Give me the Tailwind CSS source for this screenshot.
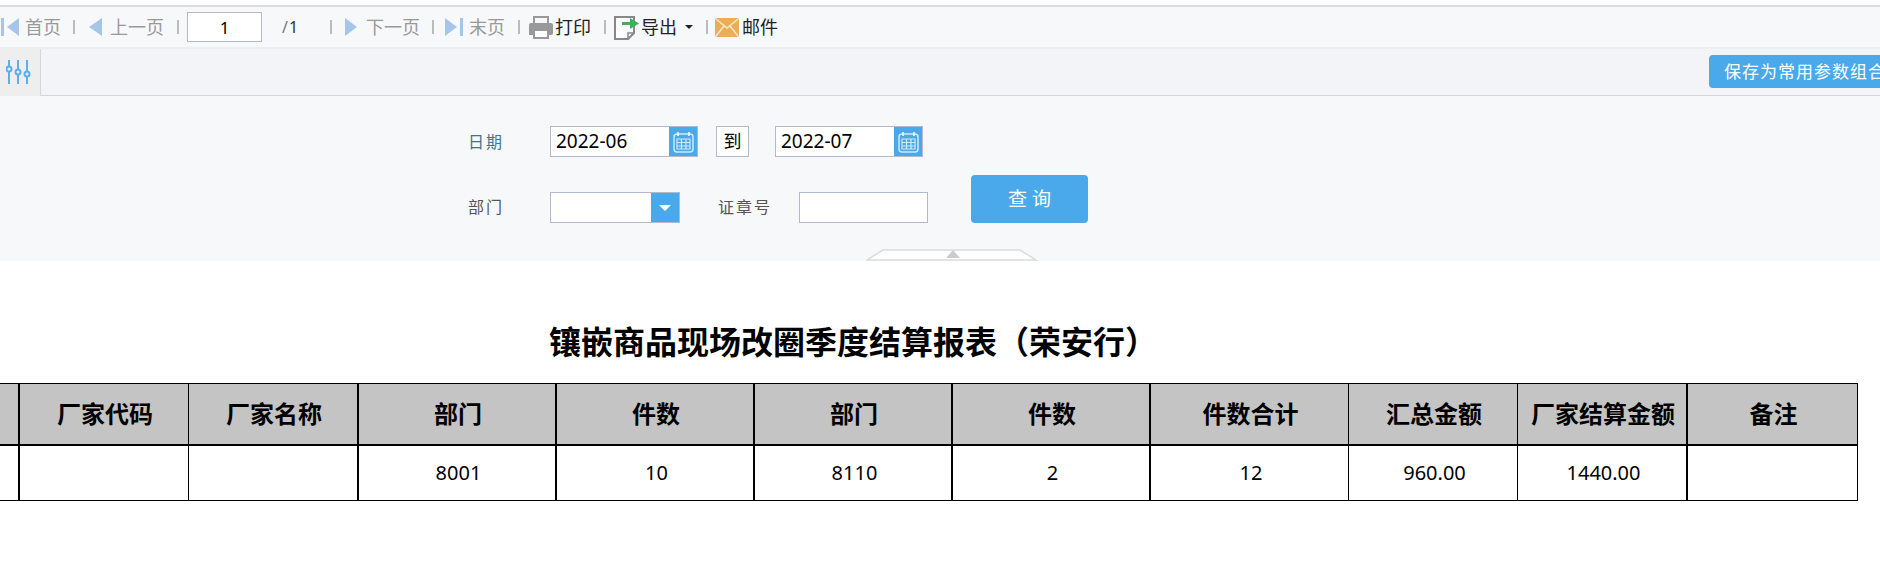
<!DOCTYPE html>
<html lang="zh">
<head>
<meta charset="utf-8">
<script src="https://cdn.jsdelivr.net/npm/@tailwindcss/browser@4"></script>
</head>
<body class="bg-white overflow-hidden font-['Noto_Sans','Noto_Sans_CJK_SC',sans-serif]">
<div class="w-[1880px] h-[587px] overflow-hidden">
  <div class="h-[5px]"></div>
  <div class="h-[2px] bg-[#dddddd]"></div>

  <!-- toolbar -->
  <div class="h-[42px] bg-[#f7f8fa] border-b-2 border-[#eeeeee] flex items-center text-[18px] text-[#999999] leading-none">
    <svg class="ml-px w-[18px] h-[18px] shrink-0" viewBox="0 0 18 18"><rect x="0" y="0" width="3" height="18" fill="#a5c6e9"/><path d="M18 0V18L6 9Z" fill="#a5c6e9"/></svg>
    <span class="ml-[6px] w-[35px] whitespace-nowrap">首页</span>
    <i class="ml-[13px] w-[2px] h-[14px] bg-[#bbbbbb]"></i>
    <svg class="ml-[14px] w-[13px] h-[18px] shrink-0" viewBox="0 0 13 18"><path d="M13 0V18L0 9Z" fill="#a5c6e9"/></svg>
    <span class="ml-[8px] w-[54px] whitespace-nowrap">上一页</span>
    <i class="ml-[13px] w-[2px] h-[14px] bg-[#bbbbbb]"></i>
    <input class="ml-[8px] w-[75px] h-[30px] bg-white border border-[#b4b8cf] text-center text-[17px] text-black" value="1">
    <span class="ml-[20px] w-[17px] text-[16px] text-[#333333] whitespace-nowrap"><span class="text-[#777777] mr-px">/</span>1</span>
    <i class="ml-[31px] w-[2px] h-[14px] bg-[#bbbbbb]"></i>
    <svg class="ml-[13px] w-[12px] h-[18px] shrink-0" viewBox="0 0 12 18"><path d="M0 0V18L12 9Z" fill="#a5c6e9"/></svg>
    <span class="ml-[9px] w-[54px] whitespace-nowrap">下一页</span>
    <i class="ml-[12px] w-[2px] h-[14px] bg-[#bbbbbb]"></i>
    <svg class="ml-[11px] w-[18px] h-[18px] shrink-0" viewBox="0 0 18 18"><path d="M0 0V18L12 9Z" fill="#a5c6e9"/><rect x="15" y="0" width="3" height="18" fill="#a5c6e9"/></svg>
    <span class="ml-[6px] w-[35px] whitespace-nowrap">末页</span>
    <i class="ml-[14px] w-[2px] h-[14px] bg-[#bbbbbb]"></i>
    <svg class="ml-[9px] w-[24px] h-[23px] shrink-0" viewBox="0 0 24 23"><rect x="5" y="1" width="14" height="8" fill="none" stroke="#999999" stroke-width="2"/><path d="M2 7H22A2 2 0 0 1 24 9V17A2 2 0 0 1 22 19H0V9A2 2 0 0 1 2 7Z" fill="#999999"/><rect x="5" y="14" width="14" height="8" fill="#ffffff" stroke="#999999" stroke-width="2"/></svg>
    <span class="ml-[2px] w-[36px] text-[#222222] whitespace-nowrap">打印</span>
    <i class="ml-[13px] w-[2px] h-[14px] bg-[#bbbbbb]"></i>
    <svg class="ml-[8px] w-[25px] h-[25px] shrink-0" viewBox="0 0 25 25"><path d="M1 2H20V18L14 24H1Z" fill="#ffffff" stroke="#888888" stroke-width="2"/><path d="M14 24V18H20" fill="none" stroke="#888888" stroke-width="1.5"/><path d="M8 7H16V3L25 8.5L16 14V10H8Z" fill="#3cb15a"/></svg>
    <span class="ml-[2px] w-[36px] text-[#222222] whitespace-nowrap">导出</span>
    <i class="ml-[8px] w-0 h-0 border-x-[4px] border-x-transparent border-t-[4px] border-t-[#222222]"></i>
    <i class="ml-[13px] w-[2px] h-[14px] bg-[#bbbbbb]"></i>
    <svg class="ml-[7px] w-[24px] h-[19px] shrink-0" viewBox="0 0 24 19"><rect width="24" height="19" rx="2" fill="#eaae58"/><path d="M1 1L12 10L23 1M1 18L9 8M23 18L15 8" fill="none" stroke="#fbe7c6" stroke-width="1.5"/></svg>
    <span class="ml-[3px] w-[36px] text-[#222222] whitespace-nowrap">邮件</span>
  </div>

  <!-- tab row -->
  <div class="h-[47px] bg-[#f3f4f7] border-b border-[#d5d6dc] flex items-start">
    <div class="w-[41px] h-[47px] bg-[#eeeeee] border-r border-[#d5d6dc] flex items-center justify-center shrink-0">
      <svg class="w-[25px] h-[25px] mr-[4px] mb-[1px]" viewBox="0 0 25 25" fill="none" stroke="#58b0ee" stroke-width="2"><path d="M3 0V6.5M3 11.5V24M12 0V9.5M12 14.5V24M21 0V11.5M21 16.5V24"/><circle cx="3" cy="9" r="2.5"/><circle cx="12" cy="12" r="2.5"/><circle cx="21" cy="14" r="2.5"/></svg>
    </div>
    <div class="ml-[1668px] mt-[6px] w-[200px] h-[33px] bg-[#4aa9ea] rounded-l-[4px] text-white text-[17px] tracking-[1px] leading-[33px] pl-[15px] whitespace-nowrap shrink-0">保存为常用参数组合</div>
  </div>

  <!-- form -->
  <div class="relative h-[165px] bg-[#f7f8fa] pt-[30px] pl-[468px] text-[16px] tracking-[2px]">
    <div class="flex items-center h-[31px]">
      <span class="w-[82px] text-[#3d7788]">日期</span>
      <div class="w-[148px] h-[31px] flex border border-[#b4b8cf] bg-white">
        <span class="flex-1 pl-[5px] text-[19px] tracking-normal leading-[29px] text-black">2022-06</span>
        <span class="w-[28px] bg-[#4aa9ea] flex items-center justify-center">
          <svg class="w-[21px] h-[22px]" viewBox="0 0 21 22" fill="none" stroke="#cfe8fb" stroke-width="1.5"><rect x="1" y="3" width="19" height="18" rx="3"/><path d="M5 1V5M16 1V5" stroke="#ffffff"/><path d="M4 8H17V18H4ZM4 11.5H17M4 15H17M8.5 8V18M13 8V18" stroke-width="1.2"/></svg>
        </span>
      </div>
      <span class="ml-[18px] w-[33px] h-[31px] border border-[#b4b8cf] bg-white text-center text-[18px] tracking-normal leading-[29px] text-black">到</span>
      <div class="ml-[26px] w-[148px] h-[31px] flex border border-[#b4b8cf] bg-white">
        <span class="flex-1 pl-[5px] text-[19px] tracking-normal leading-[29px] text-black">2022-07</span>
        <span class="w-[28px] bg-[#4aa9ea] flex items-center justify-center">
          <svg class="w-[21px] h-[22px]" viewBox="0 0 21 22" fill="none" stroke="#cfe8fb" stroke-width="1.5"><rect x="1" y="3" width="19" height="18" rx="3"/><path d="M5 1V5M16 1V5" stroke="#ffffff"/><path d="M4 8H17V18H4ZM4 11.5H17M4 15H17M8.5 8V18M13 8V18" stroke-width="1.2"/></svg>
        </span>
      </div>
    </div>
    <div class="mt-[18px] flex items-end h-[48px]">
      <span class="w-[82px] h-[31px] leading-[31px] text-[#555555]">部门</span>
      <div class="w-[130px] h-[31px] flex border border-[#b4b8cf] bg-white">
        <span class="flex-1"></span>
        <span class="w-[28px] bg-[#4aa9ea] flex items-center justify-center"><i class="w-0 h-0 border-x-[6px] border-x-transparent border-t-[6px] border-t-white"></i></span>
      </div>
      <span class="ml-[38px] w-[81px] h-[31px] leading-[31px] text-[#555555]">证章号</span>
      <div class="w-[129px] h-[31px] border border-[#b4b8cf] bg-white"></div>
      <button class="ml-[43px] w-[117px] h-[48px] rounded-[4px] bg-[#4aa9ea] text-white text-[19px] tracking-[0px]">查 询</button>
    </div>
    <svg class="absolute left-[866px] top-[153px] w-[172px] h-[12px]" viewBox="0 0 172 12"><path d="M1 11L17 1H154L170 11Z" fill="#ffffff" stroke="#dcdcdc" stroke-width="1.5"/><path d="M87 1L94 9H80Z" fill="#cccccc"/></svg>
  </div>

  <!-- report -->
  <h1 class="mt-[61px] ml-[549px] text-[32px] leading-[40px] font-bold text-black whitespace-nowrap h-[61px]">镶嵌商品现场改圈季度结算报表（荣安行）</h1>
  <table class="table-fixed border-separate border-spacing-0 ml-[-100px] w-[1958px] text-black text-center">
    <colgroup>
      <col class="w-[120px]"><col class="w-[169px]"><col class="w-[170px]"><col class="w-[198px]"><col class="w-[198px]"><col class="w-[198px]"><col class="w-[198px]"><col class="w-[198px]"><col class="w-[169px]"><col class="w-[170px]"><col class="w-[170px]">
    </colgroup>
    <thead>
      <tr class="h-[63px] bg-[#c4c4c4] text-[24px] font-bold">
        <th class="border-y border-black border-b-2 border-r-2"></th>
        <th class="pl-[2px] border-t border-b-2 border-r border-black">厂家代码</th>
        <th class="pl-[2px] border-t border-b-2 border-r-2 border-black">厂家名称</th>
        <th class="pl-[2px] border-t border-b-2 border-r-2 border-black">部门</th>
        <th class="pl-[2px] border-t border-b-2 border-r-2 border-black">件数</th>
        <th class="pl-[2px] border-t border-b-2 border-r-2 border-black">部门</th>
        <th class="pl-[2px] border-t border-b-2 border-r-2 border-black">件数</th>
        <th class="pl-[2px] border-t border-b-2 border-r border-black">件数合计</th>
        <th class="pl-[2px] border-t border-b-2 border-r border-black">汇总金额</th>
        <th class="pl-[2px] border-t border-b-2 border-r-2 border-black">厂家结算金额</th>
        <th class="pl-[2px] border-t border-b-2 border-r border-black">备注</th>
      </tr>
    </thead>
    <tbody>
      <tr class="h-[55px] text-[20px]">
        <td class="border-b border-r-2 border-black"></td>
        <td class="border-b border-r border-black"></td>
        <td class="border-b border-r-2 border-black"></td>
        <td class="pl-[3px] border-b border-r-2 border-black">8001</td>
        <td class="pl-[3px] border-b border-r-2 border-black">10</td>
        <td class="pl-[3px] border-b border-r-2 border-black">8110</td>
        <td class="pl-[3px] border-b border-r-2 border-black">2</td>
        <td class="pl-[3px] border-b border-r border-black">12</td>
        <td class="pl-[3px] border-b border-r border-black">960.00</td>
        <td class="pl-[3px] border-b border-r-2 border-black">1440.00</td>
        <td class="border-b border-r border-black"></td>
      </tr>
    </tbody>
  </table>
</div>
</body>
</html>
